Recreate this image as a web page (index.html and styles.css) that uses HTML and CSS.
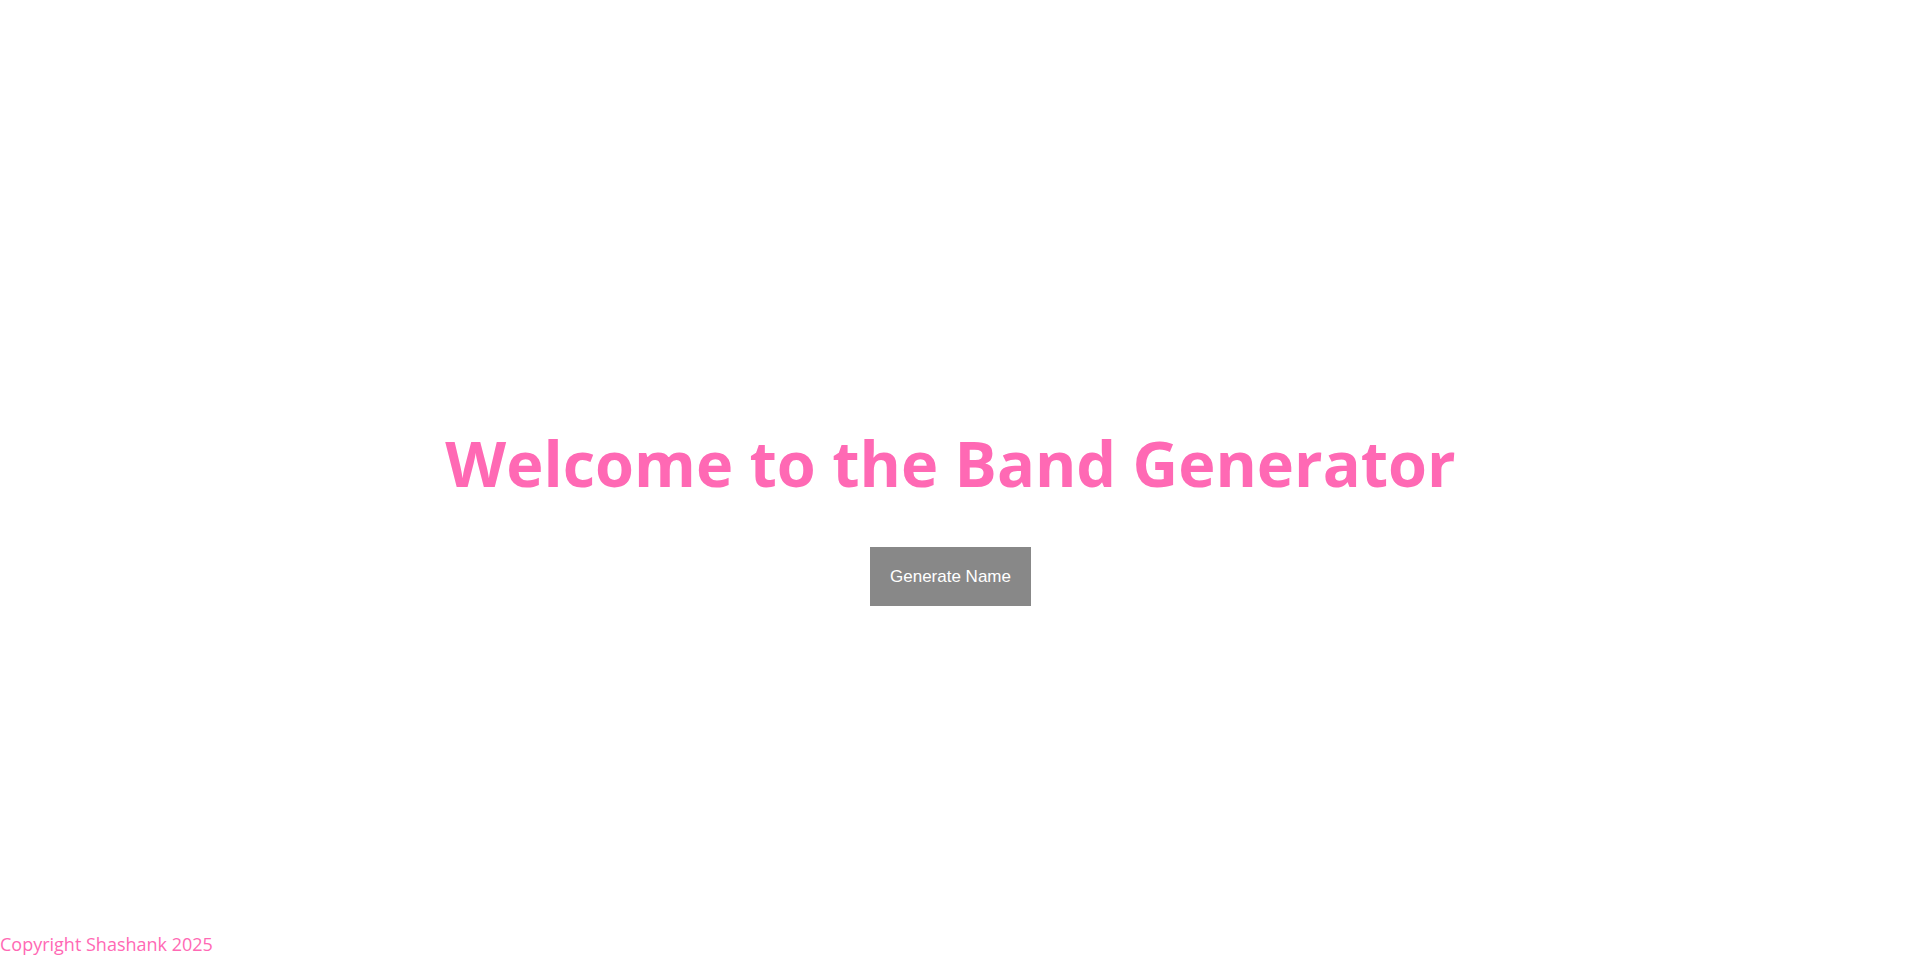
FILE: index.html
```html
<!DOCTYPE html>
<html lang="en">
<head>
<meta charset="utf-8">
<title>Band Generator</title>
<link rel="stylesheet" href="styles.css">
</head>
<body>
<main class="main">
  <h1 class="title">Welcome to the Band Generator</h1>
  <button class="btn" type="button">Generate Name</button>
</main>
<footer class="footer">Copyright Shashank 2025</footer>
</body>
</html>
```
FILE: styles.css
```css
html, body {
  margin: 0;
  padding: 0;
  background: #ffffff;
}
body {
  min-height: 100vh;
  display: flex;
  flex-direction: column;
  font-family: "Open Sans", "Noto Sans", sans-serif;
  color: #ff69b4;
}
.main {
  flex: 1;
  display: flex;
  flex-direction: column;
  align-items: center;
  justify-content: center;
  padding-top: 96px;
  padding-right: 20px;
}
.title {
  margin: 0 0 44px;
  font-size: 63px;
  font-weight: 700;
  line-height: 1.3;
  color: #ff69b4;
}
.btn {
  background: #888888;
  color: #ffffff;
  border: none;
  padding: 20px 20px;
  font-family: "Liberation Sans", Arial, sans-serif;
  font-size: 17px;
  line-height: 19px;
  cursor: pointer;
}
.footer {
  font-size: 18px;
  line-height: 24px;
  padding-bottom: 17px;
  color: #ff69b4;
}
```
